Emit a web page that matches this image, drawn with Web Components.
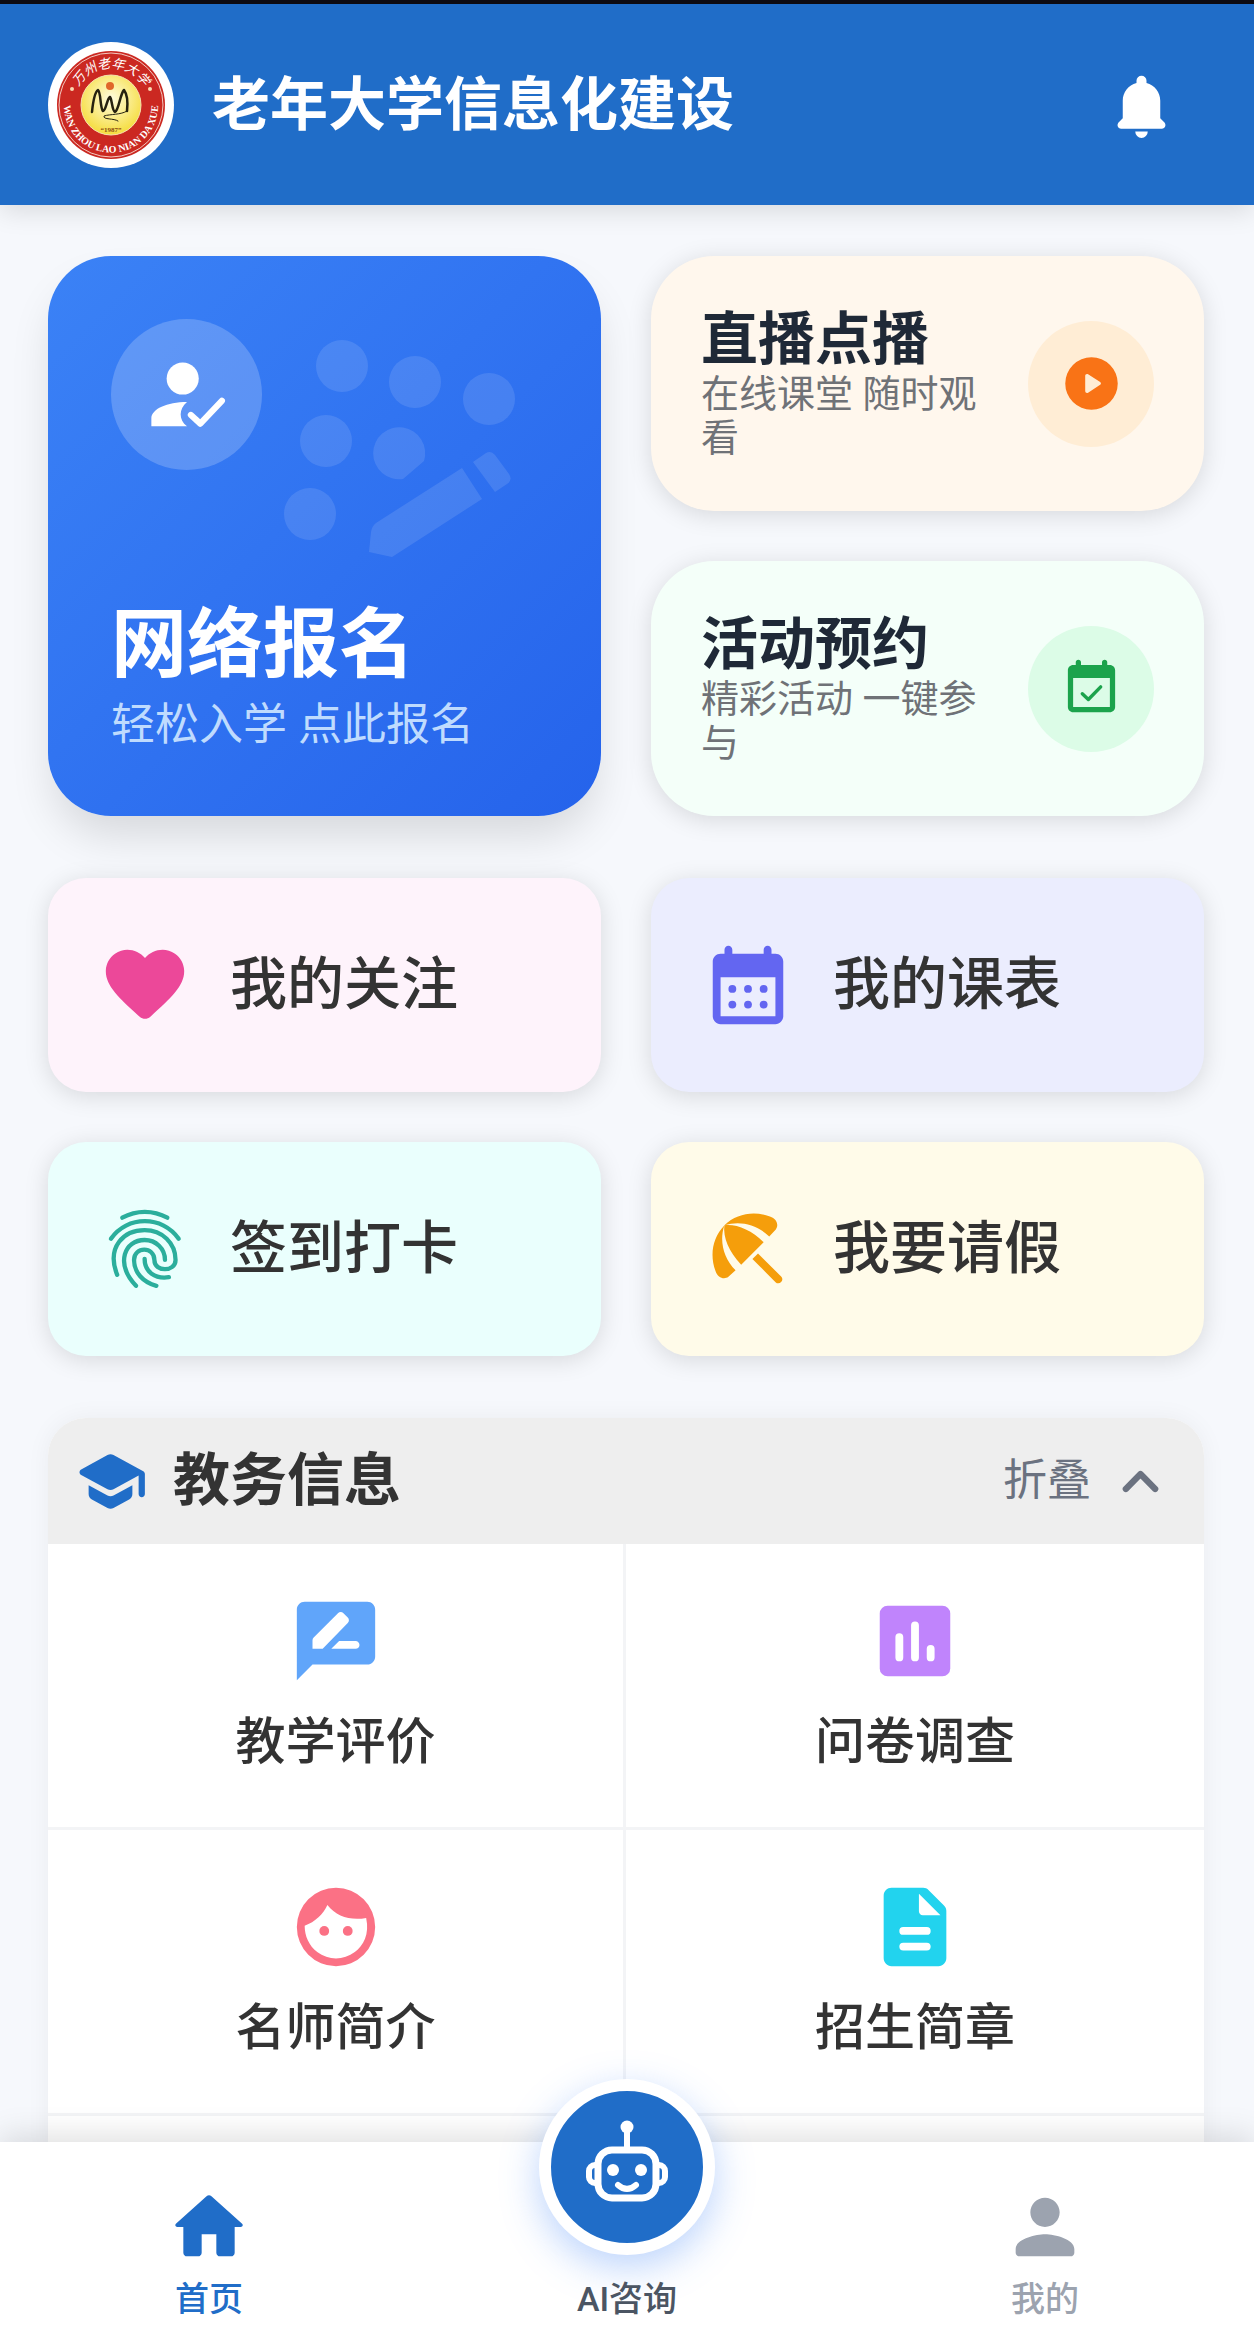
<!DOCTYPE html>
<html lang="zh-CN">
<head>
<meta charset="UTF-8">
<meta name="viewport" content="width=device-width, initial-scale=1">
<title>老年大学信息化建设</title>
<style>
body {
  margin: 0;
  font-family: Roboto, "Noto Sans CJK SC", sans-serif;
  color: #333;
  background: #f6f8fc;
}
</style>
</head>
<body>
<app-shell>
  <app-header slot="header">老年大学信息化建设</app-header>

  <hero-grid>
    <enroll-card slot="main" href="#enroll">
      网络报名
      <span slot="note">轻松入学 点此报名</span>
    </enroll-card>
    <feature-card icon="play" href="#live" style="--card:#fff7ed; --badge:#ffedd5; --accent:#f97316">
      直播点播
      <span slot="note">在线课堂 随时观看</span>
    </feature-card>
    <feature-card icon="event" href="#events" style="--card:#f4fff9; --badge:#dcfce7; --accent:#1ca34c">
      活动预约
      <span slot="note">精彩活动 一键参与</span>
    </feature-card>
  </hero-grid>

  <quick-grid>
    <quick-card icon="heart" href="#follow" style="--card:#fef3fb; --accent:#ec4899">我的关注</quick-card>
    <quick-card icon="calendar" href="#schedule" style="--card:#ebedfe; --accent:#6366f1">我的课表</quick-card>
    <quick-card icon="fingerprint" href="#checkin" style="--card:#eafffd; --accent:#2bae9c">签到打卡</quick-card>
    <quick-card icon="umbrella" href="#leave" style="--card:#fffbe9; --accent:#f59e0b">我要请假</quick-card>
  </quick-grid>

  <info-section label="教务信息">
    <info-cell icon="review" href="#review" style="--accent:#60a5fa">教学评价</info-cell>
    <info-cell icon="survey" href="#survey" style="--accent:#c084fc">问卷调查</info-cell>
    <info-cell icon="face" href="#teachers" style="--accent:#fb7185">名师简介</info-cell>
    <info-cell icon="document" href="#admission" style="--accent:#22d3ee">招生简章</info-cell>
  </info-section>

  <tab-bar slot="footer">
    <tab-item icon="home" href="#home" style="color:#206dc8">首页</tab-item>
    <tab-item icon="robot" href="#ai" round style="color:#4b5563">AI咨询</tab-item>
    <tab-item icon="person" href="#me" style="color:#9ca3af">我的</tab-item>
  </tab-bar>
</app-shell>

<script>
const icons = {
  bell: `<path d="M12 2.5a1.6 1.6 0 0 1 1.6 1.6v.7c2.6.7 4.4 2.9 4.4 5.7v5.6l1.2 1.2c.9.9.4 2.1-.7 2.1h-13c-1.1 0-1.6-1.2-.7-2.1L6 16.1v-5.6c0-2.8 1.8-5 4.4-5.7v-.7A1.6 1.6 0 0 1 12 2.5zM10 20.3h4a2 2.1 0 0 1-4 0z"/>`,
  userCheck: `<circle cx="10.9" cy="7.8" r="4.1"/><path d="M2.9 20v-2c0-2.4 4-4.2 9.1-4.2-2.1 1.7-2.2 4.6 0 6.2z"/><path d="M13 17.1l2.4 2.2 5.5-5.8" fill="none" stroke="currentColor" stroke-width="1.6" stroke-linecap="round" stroke-linejoin="round"/>`,
  play: `<path fill-rule="evenodd" d="M12 2a10 10 0 1 0 0 20a10 10 0 1 0 0-20zM9.6 9.1v5.8c0 .6.6.9 1.1.6l4.6-3c.4-.3.4-.8 0-1.1l-4.6-2.9c-.5-.3-1.1 0-1.1.6z"/>`,
  event: `<path fill-rule="evenodd" d="M7 1c.55 0 1 .45 1 1v1h8V2c0-.55.45-1 1-1s1 .45 1 1v1h1c1.1 0 2 .9 2 2v14c0 1.1-.9 2-2 2H5c-1.1 0-2-.9-2-2V5c0-1.1.9-2 2-2h1V2c0-.55.45-1 1-1zM5 8v11h14V8z"/><path d="M8.5 14l2.3 2.2 4.7-4.8" fill="none" stroke="currentColor" stroke-width="1.3" stroke-linecap="round" stroke-linejoin="round"/>`,
  heart: `<path d="M13.35 20.13c-.76.69-1.93.69-2.69-.01l-.11-.1C5.3 15.27 1.87 12.16 2 8.28c.06-1.7.93-3.33 2.34-4.29 2.64-1.8 5.9-.96 7.66 1.1 1.76-2.06 5.02-2.91 7.66-1.1 1.41.96 2.28 2.59 2.34 4.29.14 3.88-3.3 6.99-8.55 11.76z"/>`,
  calendar: `<path fill-rule="evenodd" d="M7 2c.55 0 1 .45 1 1v1h8V3c0-.55.45-1 1-1s1 .45 1 1v1h1c1.1 0 2 .9 2 2v14c0 1.1-.9 2-2 2H5c-1.1 0-2-.9-2-2V6c0-1.1.9-2 2-2h1V3c0-.55.45-1 1-1zM5 10v10h14V10z"/><circle cx="8" cy="13" r="1"/><circle cx="12" cy="13" r="1"/><circle cx="16" cy="13" r="1"/><circle cx="8" cy="17" r="1"/><circle cx="12" cy="17" r="1"/><circle cx="16" cy="17" r="1"/>`,
  fingerprint: `<g fill="none" stroke="currentColor" stroke-width="1.1" stroke-linecap="round"><path d="M6.2 4C9.8 2 14.1 2 17.7 4"/><path d="M3.3 9.4c4.1-6 13.2-6 17.3 0"/><path d="M4.9 18.6C2 11.3 6.8 7.2 11.9 7.2c4.5 0 7.9 3.3 7.9 7.6 0 3.1-5.4 3.2-5.4 0 0-3.5-5.2-3.5-5.2 0 0 3.2 2.3 5.7 5.7 6.6"/><path d="M9.7 21.4C4.3 15.6 6.8 9.7 11.9 9.7c2.900 0 5.200 2.200 5.200 5.100"/><path d="M11.9 14.5c0 3.400 2.700 5.200 6.200 4.700"/></g>`,
  umbrella: `<path d="M5.95 5.98C2.9 9.1 2.2 13.6 3.7 17.6c.6 1.8 2.2 2.3 3.3 1.5l1.83-1.68C5.7 14.29 4.65 9.91 5.95 5.98z"/><path d="M17.42 8.83L19.1 7c.8-1.1.3-2.7-1.5-3.3-4-1.5-8.5-.8-11.62 2.25 3.93-1.3 8.31-.25 11.44 2.88z"/><path d="M5.97 5.96c-.38 3.02 1.16 6.89 4.29 10.03l5.73-5.73c-3.13-3.13-7.01-4.68-10.02-4.3z"/><path d="M13.13 14.56l1.43-1.43 5.9 5.9c.95.95-.48 2.38-1.43 1.43z"/>`,
  school: `<path d="M5 13.18v2.81c0 .73.4 1.41 1.04 1.76l5 2.73c.6.33 1.32.33 1.92 0l5-2.73c.64-.35 1.04-1.03 1.04-1.76v-2.81l-6.04 3.3c-.6.33-1.32.33-1.92 0zm6.04-9.66l-8.43 4.6c-.69.38-.69 1.38 0 1.76l8.43 4.6c.6.33 1.32.33 1.92 0L21 10.09V16c0 .55.45 1 1 1s1-.45 1-1V9.59c0-.37-.2-.7-.52-.88l-9.52-5.19a2.04 2.04 0 0 0-1.92 0z"/>`,
  chevron: `<path d="M7.3 14.4L12 9.6l4.7 4.8" fill="none" stroke="currentColor" stroke-width="2" stroke-linecap="round" stroke-linejoin="round"/>`,
  review: `<path fill-rule="evenodd" d="M20 2H4c-1.1 0-2 .9-2 2v18l4-4h14c1.1 0 2-.9 2-2V4c0-1.1-.9-2-2-2zM6 14v-2.2c0-.3.1-.5.3-.7l6.2-6.2c.4-.4 1-.4 1.4 0l1.1 1.1c.4.4.4 1 0 1.4L8.6 14zm11 0h-6.2l2-2H17c.55 0 1 .45 1 1s-.45 1-1 1z"/>`,
  survey: `<rect x="3" y="3" width="18" height="18" rx="2"/><path d="M8 11v5.2M12 8v8.2M16 14v2.2" fill="none" stroke="#fff" stroke-width="2" stroke-linecap="round"/>`,
  face: `<path fill-rule="evenodd" d="M12 2a10 10 0 1 0 0 20a10 10 0 1 0 0-20zM4 11.7c2.7-1 4.8-3 5.8-5.3 2.3 3 6 4 9.9 3.3.9 4.2-.7 7-2.9 8.7-2.9 2.2-6.7 2.2-9.6 0C5.1 16.8 4 14.3 4 11.7z"/><circle cx="9" cy="13" r="1.25"/><circle cx="15" cy="13" r="1.25"/>`,
  document: `<path fill-rule="evenodd" d="M14.1 2H6c-1.1 0-2 .9-2 2v16c0 1.1.9 2 2 2h12c1.1 0 2-.9 2-2V7.9c0-.5-.2-1-.6-1.4l-3.9-3.9c-.4-.4-.9-.6-1.4-.6zM13 3.5V8c0 .6.4 1 1 1h4.5z"/><path d="M9 13h6M9 17h6" fill="none" stroke="#fff" stroke-width="2" stroke-linecap="round"/>`,
  home: `<path d="M10 19v-5h4v5c0 .55.45 1 1 1h3c.55 0 1-.45 1-1v-7h1.7c.46 0 .68-.57.33-.87L12.67 3.6c-.38-.34-.96-.34-1.34 0l-8.36 7.53c-.34.3-.13.87.33.87H5v7c0 .55.45 1 1 1h3c.55 0 1-.45 1-1z"/>`,
  person: `<path d="M12 12c2.21 0 4-1.79 4-4s-1.79-4-4-4-4 1.79-4 4 1.79 4 4 4zm0 2c-2.67 0-8 1.34-8 4v1c0 .55.45 1 1 1h14c.55 0 1-.45 1-1v-1c0-2.66-5.33-4-8-4z"/>`,
  robot: `<g transform="scale(.2553)"><circle cx="47" cy="7" r="6.5"/><g fill="none" stroke="currentColor" stroke-width="6" stroke-linecap="round"><path d="M47 10v18"/><rect x="18" y="30" width="58" height="48" rx="14" stroke-width="7"/><path d="M18 45h-3a6 6 0 0 0-6 6v6a6 6 0 0 0 6 6h3M76 45h3a6 6 0 0 1 6 6v6a6 6 0 0 1-6 6h-3"/><path d="M38 65q9 8 18 0"/></g><circle cx="33" cy="50" r="6"/><circle cx="61" cy="50" r="6"/></g>`
};

// attaches an open shadow root filled from a template string
class BaseElement extends HTMLElement {
  constructor() {
    super();
    this.attachShadow({ mode: "open" });
  }

  connectedCallback() {
    const template = document.createElement("template");
    template.innerHTML = this.template();
    this.shadowRoot.replaceChildren(template.content.cloneNode(true));
  }

  get icon() {
    return this.getAttribute("icon");
  }

  get href() {
    return this.getAttribute("href") || "#";
  }
}

customElements.define("app-icon", class extends BaseElement {
  template() {
    return `
<style>
:host { display: block; flex: none; width: var(--size, 94px); height: var(--size, 94px); }
svg { display: block; width: 100%; height: 100%; }
</style>
<svg viewBox="0 0 24 24" fill="currentColor" aria-hidden="true">${icons[this.getAttribute("name")]}</svg>`;
  }
});

customElements.define("app-shell", class extends BaseElement {
  template() {
    return `
<style>
:host { display: flex; flex-direction: column; height: 100vh; overflow: hidden; }
main {
  flex: 1;
  min-height: 0;
  overflow-y: auto;
  scrollbar-width: none;
  padding: 51px 50px 0 48px;
  display: flex;
  flex-direction: column;
  gap: 62px;
}
::slotted(*) { flex: none; }
</style>
<slot name="header"></slot>
<main><slot></slot></main>
<slot name="footer"></slot>`;
  }
});

customElements.define("school-logo", class extends BaseElement {
  template() {
    return `
<style>
:host { display: block; flex: none; width: 126px; height: 126px; }
svg { display: block; width: 100%; height: 100%; }
.cn { font: italic 400 13px "Noto Sans CJK SC", sans-serif; }
.en { font: 700 10px "Liberation Serif", serif; }
.year { font: 700 7px "Liberation Serif", serif; }
</style>
<svg viewBox="0 0 126 126" role="img" aria-label="校徽">
  <defs>
    <radialGradient id="gold" cx=".5" cy=".4" r=".6">
      <stop offset="0" stop-color="#fffde0"/>
      <stop offset="1" stop-color="#f5dc3c"/>
    </radialGradient>
    <path id="top" d="M26 63A37 37 0 0 1 100 63"/>
    <path id="bottom" d="M17 54A47 47 0 1 0 109 54"/>
  </defs>
  <circle cx="63" cy="63" r="63" fill="#fff"/>
  <circle cx="63" cy="63" r="54" fill="#cb2821"/>
  <circle cx="63" cy="63" r="52" fill="none" stroke="#f3c9c0" stroke-width="1"/>
  <circle cx="63" cy="63" r="30" fill="url(#gold)" stroke="#f6e2b0" stroke-width="1"/>
  <circle cx="24" cy="47" r="2" fill="#fbd9b0"/>
  <circle cx="102" cy="47" r="2" fill="#fbd9b0"/>
  <text class="cn" fill="#fff" text-anchor="middle"><textPath href="#top" startOffset="50%">万州老年大学</textPath></text>
  <text class="en" fill="#fff" text-anchor="middle"><textPath href="#bottom" startOffset="50%">WAN ZHOU LAO NIAN DA XUE</textPath></text>
  <circle cx="62" cy="44" r="4" fill="#e0672a"/>
  <g fill="none" stroke="#26220f" stroke-linecap="round" stroke-linejoin="round">
    <path d="M44 70C45 60 47 50 50 48C53 50 52 66 55 69C58 69 59 56 62 55C64 57 64 69 67 70C71 68 72 52 76 48C79 52 80 60 79 69" stroke-width="2.5"/>
    <path d="M79 69C73 73 62 72 56 74C55 78 66 76 70 79" stroke-width="1"/>
  </g>
  <text class="year" x="63" y="90" fill="#8a4a10" text-anchor="middle">“1987”</text>
</svg>`;
  }
});

customElements.define("app-header", class extends BaseElement {
  template() {
    return `
<style>
:host { display: block; position: relative; color: #fff; }
header {
  display: flex;
  align-items: center;
  gap: 38px;
  padding: 38px 50px 37px 48px;
  border-top: 4px solid #0d0b12;
  background: #206dc8;
  box-shadow: 0 6px 25px rgba(0, 0, 0, .12);
}
h1 { flex: 1; margin: 0; font-size: 58px; line-height: 84px; font-weight: 700; }
button {
  display: grid;
  place-items: center;
  width: 126px;
  height: 126px;
  padding: 0;
  border: 0;
  background: none;
  color: inherit;
  --size: 75px;
}
</style>
<header>
  <school-logo></school-logo>
  <h1><slot></slot></h1>
  <button type="button" aria-label="通知"><app-icon name="bell"></app-icon></button>
</header>`;
  }
});

customElements.define("hero-grid", class extends BaseElement {
  template() {
    return `
<style>
:host { display: grid; grid-template-columns: 1fr 1fr; gap: 50px; }
div { display: grid; grid-auto-rows: 1fr; gap: 50px; }
</style>
<slot name="main"></slot>
<div><slot></slot></div>`;
  }
});

customElements.define("enroll-card", class extends BaseElement {
  template() {
    return `
<style>
:host { display: block; }
a {
  position: relative;
  box-sizing: border-box;
  display: flex;
  flex-direction: column;
  justify-content: space-between;
  height: 100%;
  padding: 63px;
  border-radius: 63px;
  background: linear-gradient(135deg, #3b82f6, #2563eb);
  box-shadow: 0 25px 44px -6px rgba(0, 0, 0, .13);
  color: #fff;
  text-decoration: none;
}
.badge {
  display: grid;
  place-items: center;
  width: 151px;
  height: 151px;
  border-radius: 50%;
  background: rgba(255, 255, 255, .2);
}
.art { position: absolute; top: 63px; right: 63px; width: 252px; height: 252px; overflow: visible; opacity: .11; }
h2 { margin: 0 0 6px; font-size: 76px; line-height: 92px; font-weight: 700; }
p { margin: 0; font-size: 44px; line-height: 56px; color: #bfdbfe; }
</style>
<a href="${this.href}">
  <svg class="art" viewBox="0 0 252 252" fill="#fff" aria-hidden="true">
    <circle cx="56" cy="47" r="26"/>
    <circle cx="129" cy="63" r="26"/>
    <circle cx="203" cy="80" r="26"/>
    <circle cx="40" cy="122" r="26"/>
    <path d="M138 142A26 26 0 1 0 117 160Z"/>
    <circle cx="24" cy="195" r="26"/>
    <path d="M176 149l20 31-90 58-23-5 2-20q1-6 5-9z"/>
    <path d="M187 143l13-9q5-3 9 2l14 19q4 6-2 10l-12 8z"/>
  </svg>
  <span class="badge"><app-icon name="userCheck"></app-icon></span>
  <div>
    <h2><slot></slot></h2>
    <p><slot name="note"></slot></p>
  </div>
</a>`;
  }
});

customElements.define("feature-card", class extends BaseElement {
  template() {
    return `
<style>
:host { display: block; }
a {
  box-sizing: border-box;
  display: flex;
  align-items: center;
  gap: 38px;
  height: 100%;
  min-height: 255px;
  padding: 50px;
  border-radius: 63px;
  background: var(--card);
  box-shadow: 0 4px 25px rgba(0, 0, 0, .13);
  color: #1f2937;
  text-decoration: none;
}
div { flex: 1; min-width: 0; }
h2 { margin: 0; font-size: 57px; line-height: 64px; font-weight: 700; }
p { margin: 0; font-size: 38px; line-height: 44px; color: #6f7277; }
.badge {
  flex: none;
  display: grid;
  place-items: center;
  width: 126px;
  height: 126px;
  border-radius: 50%;
  background: var(--badge);
  color: var(--accent);
  --size: 63px;
}
</style>
<a href="${this.href}">
  <div>
    <h2><slot></slot></h2>
    <p><slot name="note"></slot></p>
  </div>
  <span class="badge"><app-icon name="${this.icon}"></app-icon></span>
</a>`;
  }
});

customElements.define("quick-grid", class extends BaseElement {
  template() {
    return `
<style>
:host { display: grid; grid-template-columns: 1fr 1fr; gap: 50px; }
</style>
<slot></slot>`;
  }
});

customElements.define("quick-card", class extends BaseElement {
  template() {
    return `
<style>
:host { display: block; }
a {
  display: flex;
  align-items: center;
  gap: 38px;
  padding: 60px 50px;
  border-radius: 38px;
  background: var(--card);
  box-shadow: 0 4px 25px rgba(0, 0, 0, .13);
  color: #333;
  font-size: 57px;
  line-height: 84px;
  font-weight: 500;
  text-decoration: none;
}
app-icon { color: var(--accent); }
</style>
<a href="${this.href}"><app-icon name="${this.icon}"></app-icon><slot></slot></a>`;
  }
});

customElements.define("info-section", class extends BaseElement {
  template() {
    return `
<style>
:host {
  display: block;
  overflow: hidden;
  border-radius: 38px;
  background: #fff;
  box-shadow: 0 0 25px rgba(0, 0, 0, .05);
}
header {
  display: flex;
  align-items: center;
  gap: 25px;
  padding: 21px 26px 21px 25px;
  background: #eee;
  --size: 75px;
}
header > app-icon { color: #206dc8; }
h2 { flex: 1; margin: 0; font-size: 57px; line-height: 84px; font-weight: 700; }
button {
  display: flex;
  align-items: center;
  gap: 12px;
  padding: 0;
  border: 0;
  background: none;
  font: inherit;
  font-size: 44px;
  line-height: 64px;
  color: #6b7280;
}
.cells { display: grid; grid-template-columns: 1fr 1fr; padding-bottom: 63px; }
</style>
<header>
  <app-icon name="school"></app-icon>
  <h2>${this.getAttribute("label")}</h2>
  <button type="button" aria-expanded="true">折叠<app-icon name="chevron"></app-icon></button>
</header>
<div class="cells"><slot></slot></div>`;
  }

  connectedCallback() {
    super.connectedCallback();
    const button = this.shadowRoot.querySelector("button");
    const cells = this.shadowRoot.querySelector(".cells");
    button.addEventListener("click", () => {
      const open = button.getAttribute("aria-expanded") === "true";
      button.setAttribute("aria-expanded", String(!open));
      cells.style.display = open ? "none" : "";
    });
  }
});

customElements.define("info-cell", class extends BaseElement {
  template() {
    return `
<style>
:host { display: block; border-bottom: 3px solid #f3f4f6; }
:host(:nth-child(odd)) { border-right: 3px solid #f3f4f6; }
a {
  display: flex;
  flex-direction: column;
  align-items: center;
  gap: 20px;
  padding: 50px 25px;
  color: #333;
  font-size: 50px;
  line-height: 69px;
  font-weight: 500;
  text-decoration: none;
}
app-icon { color: var(--accent); }
</style>
<a href="${this.href}"><app-icon name="${this.icon}"></app-icon><slot></slot></a>`;
  }
});

customElements.define("tab-bar", class extends BaseElement {
  template() {
    return `
<style>
:host { display: block; position: relative; }
nav {
  display: grid;
  grid-template-columns: repeat(3, 1fr);
  height: 201px;
  background: #fff;
  box-shadow: 0 -6px 30px rgba(0, 0, 0, .13);
}
</style>
<nav><slot></slot></nav>`;
  }
});

customElements.define("tab-item", class extends BaseElement {
  template() {
    return `
<style>
:host { display: flex; flex-direction: column; justify-content: flex-end; min-height: 0; }
a {
  display: flex;
  flex-direction: column;
  align-items: center;
  gap: 4px;
  padding-bottom: 20px;
  color: inherit;
  font-size: 34px;
  line-height: 48px;
  font-weight: 500;
  text-decoration: none;
  --size: 88px;
}
/* raised round button in the middle of the bar */
:host([round]) a { gap: 20px; --size: 94px; }
:host([round]) .mark {
  display: grid;
  place-items: center;
  width: 152px;
  height: 152px;
  border: 12px solid #fff;
  border-radius: 50%;
  background: #206dc8;
  box-shadow: 0 12px 38px rgba(59, 130, 246, .35);
  color: #fff;
}
</style>
<a href="${this.href}">
  <span class="mark"><app-icon name="${this.icon}"></app-icon></span>
  <slot></slot>
</a>`;
  }
});
</script>
</body>
</html>
